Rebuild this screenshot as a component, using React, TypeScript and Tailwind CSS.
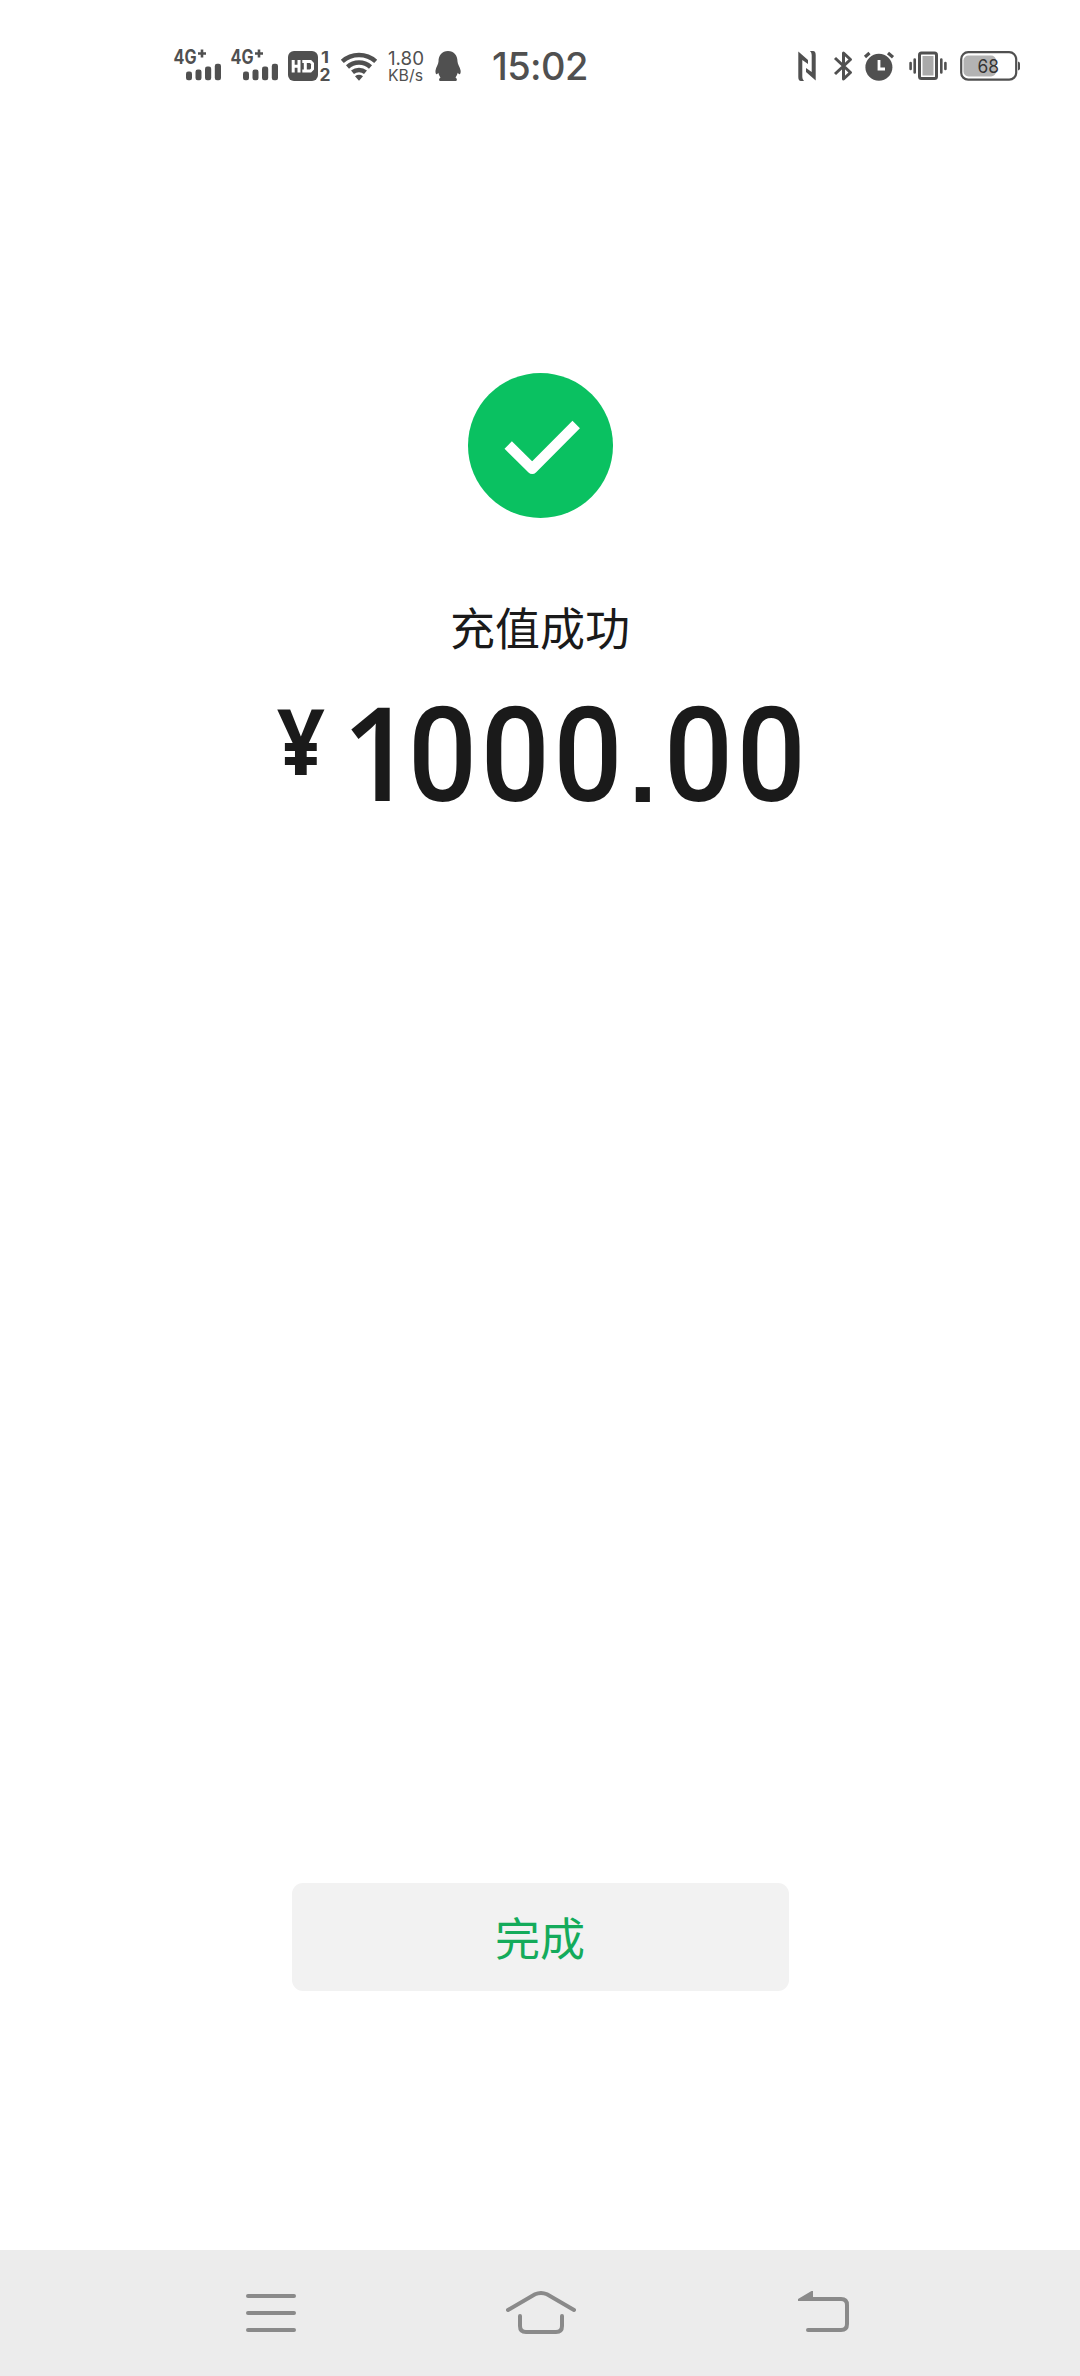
import { FC } from "react";

export default function App() {
  return (
    <div className="w-[1080px] h-[2376px] flex flex-col bg-white overflow-hidden font-['Noto_Sans','Noto_Sans_CJK_SC',sans-serif]">
      <StatusBar />

      <main className="flex-1 flex flex-col items-center">
        <SuccessIcon />
        <h1 className="mt-[75px] h-[68px] text-[45px] leading-[68px] text-[#1a1a1a] font-['Noto_Sans_CJK_SC',sans-serif]">充值成功</h1>

        {/* Amount */}
        <div className="mt-[20px] w-[527px] h-[140px] flex items-start whitespace-nowrap text-[#1a1a1a] leading-[140px] font-['Roboto',sans-serif]">
          <span className="w-[65.5px] shrink-0 mt-[2px] text-[91px] leading-[114px] font-bold font-['Open_Sans',sans-serif] origin-left scale-x-92">¥</span>
          <span className="w-[66px] shrink-0 text-[130px] font-semibold font-['Open_Sans',sans-serif] origin-left scale-x-96">1</span>
          <span className="w-[219px] shrink-0 mt-[5px] text-[132px] font-medium tracking-[4px] origin-left scale-x-92">000</span>
          <span className="w-[36.5px] shrink-0 mt-[16px] pl-[2px] text-[100px] font-bold font-['Liberation_Sans',sans-serif]">.</span>
          <span className="w-[140px] shrink-0 mt-[5px] text-[132px] font-medium tracking-[4px] origin-left scale-x-92">00</span>
        </div>

        <button className="mt-auto mb-[259px] w-[497px] h-[108px] rounded-[11px] bg-[#f2f2f2] text-[45px] leading-[108px] text-[#14ab5b] font-['Noto_Sans_CJK_SC',sans-serif]">
          完成
        </button>
      </main>

      <NavBar />
    </div>
  );
}

const StatusBar: FC = () => {
  return (
    <header className="h-[100px] pt-[50px] pl-[174px] pr-[60px] flex justify-between text-[#505050]">
      <div className="flex h-[32px]">
        <Signal />
        <Signal />
        <svg className="w-[43px] h-[32px] mr-[9px] overflow-visible" viewBox="0 0 43 32" fill="currentColor">
          <rect x="0" y="1" width="30" height="30" rx="6" />
          <path d="M5.2 10v12.5M11 10v12.5M5.2 16.200H11M14.300 11.500h8.200l2 2v5.500l-2 2h-8.200M17.300 11v10" fill="none" stroke="white" strokeWidth="3" />
          <text x="33" y="12.5" fontSize="15.500" fontWeight="700" textLength="8" lengthAdjust="spacingAndGlyphs" fontFamily="Inter">1</text>
          <text x="31.500" y="30.5" fontSize="17" fontWeight="700" textLength="11" lengthAdjust="spacingAndGlyphs" fontFamily="Inter">2</text>
        </svg>
        <svg className="w-[38px] h-[32px] mr-[9px]" viewBox="0 0 38 32" fill="none" stroke="currentColor" strokeWidth="4.500">
          <path d="M2.300 11.300a25 25 0 0 1 33.400 0" />
          <path d="M7.500 17a17 17 0 0 1 23 0" />
          <path d="M12.500 22.300a10 10 0 0 1 13 0" />
          <path d="M15 26.200q4-2.800 8 0L19 30.700z" fill="currentColor" stroke="none" />
        </svg>
        <svg className="w-[38px] h-[32px] mr-[9px] overflow-visible" viewBox="0 0 38 32" fill="currentColor" fontFamily="Inter">
          <text x="1" y="15" fontSize="18.5" textLength="36" lengthAdjust="spacingAndGlyphs">1.80</text>
          <text x="1" y="31" fontSize="15.5" textLength="35" lengthAdjust="spacingAndGlyphs">KB/s</text>
        </svg>
        <svg className="w-[28px] h-[32px] mr-[30px]" viewBox="0 0 28 32" fill="currentColor">
          <path d="M14 1C8 1 4.500 5.500 4.500 11.500C4.500 14 2 17 1.500 20.500C1.200 23 2 24.500 2.700 24.300C3.300 24.100 3.800 23.300 4.300 22.700C4.700 24.500 5.600 26 6.500 27.500C4.800 28.500 4.500 31 6.500 31H21.500C23.500 31 23.200 28.500 21.500 27.500C22.500 26 23.300 24.500 23.800 22.700C24.300 23.300 24.800 24.100 25.400 24.300C26.100 24.500 27 23 26.600 20.500C26 17 23.500 14 23.500 11.500C23.500 5.500 20 1 14 1Z" />
        </svg>
        <span className="text-[38px] leading-[32px] tracking-[-0.6px] font-medium font-['Inter',sans-serif]">15:02</span>
      </div>

      <div className="flex h-[32px]">
        {/* NFC */}
        <svg className="w-[20px] h-[32px] mr-[16px]" viewBox="0 0 20 32" fill="currentColor">
          <path d="M1.300 1.500L11 10V14L5.300 10V27Q5.300 29.500 7 31H4Q1.300 31 1.300 27Z" />
          <path d="M18.700 30.500L9 22V18L14.700 22V5Q14.700 2.500 13 1H16Q18.700 1 18.700 5Z" />
        </svg>
        {/* Bluetooth */}
        <svg className="w-[20px] h-[32px] mr-[9px]" viewBox="0 0 20 32" fill="none" stroke="currentColor" strokeWidth="3" strokeLinejoin="round">
          <path d="M2 8L17.500 22.500L10.500 29V3L17.500 9.500L2 24" />
        </svg>
        {/* Alarm */}
        <svg className="w-[34px] h-[32px] mr-[11px]" viewBox="0 0 34 32" fill="none" stroke="currentColor" strokeWidth="3.200">
          <circle cx="16.900" cy="17.300" r="13.500" fill="currentColor" stroke="none" />
          <path d="M3 7L7.500 3M26 3L31 7.300" />
          <path d="M17 10v9h6" stroke="white" strokeWidth="2.800" />
        </svg>
        {/* Vibrate */}
        <svg className="w-[41px] h-[32px] mr-[12px]" viewBox="0 0 41 32" fill="none" stroke="currentColor" strokeWidth="2.600">
          <rect x="12.500" y="3" width="17" height="25.500" rx="2" strokeWidth="3" />
          <rect x="15.500" y="6" width="11" height="19.500" fill="#aaa" stroke="none" />
          <path d="M3.600 13v6M7.700 9.500v13M34.300 9.500v13M38.400 13v6" strokeLinecap="round" />
        </svg>
        {/* Battery */}
        <svg className="w-[60px] h-[32px]" viewBox="0 0 60 32" fill="currentColor">
          <rect x="1.200" y="2.200" width="55" height="27.500" rx="7" fill="none" stroke="currentColor" strokeWidth="2.200" />
          <rect x="3.500" y="5.500" width="32.500" height="21" rx="5" fill="#b3b3b3" />
          <path d="M58 11.500q2 .5 2 2v5q0 1.500-2 2z" />
          <text x="17.500" y="22.500" fontSize="18.500" fill="#333" textLength="21.500" lengthAdjust="spacingAndGlyphs" fontFamily="Inter">68</text>
        </svg>
      </div>
    </header>
  );
};

// Signal strength of one SIM card
const Signal: FC = () => {
  return (
    <svg className="w-[47px] h-[32px] mr-[10px] overflow-visible" viewBox="0 0 47 32" fill="currentColor">
      <text x="-.5" y="14" fontSize="19.500" fontWeight="700" textLength="23" lengthAdjust="spacingAndGlyphs" fontFamily="Inter">4G</text>
      <path d="M24 3.500h8M28 -.5v8" stroke="currentColor" strokeWidth="2.600" />
      <rect x="12" y="21.500" width="6" height="8.700" rx="2.200" />
      <rect x="21.500" y="19.500" width="6" height="10.700" rx="2.200" />
      <rect x="31" y="16.500" width="6.200" height="13.700" rx="2.200" />
      <rect x="40.800" y="13.700" width="6.200" height="16.500" rx="2.200" />
    </svg>
  );
};

const SuccessIcon: FC = () => {
  return (
    <svg className="mt-[273px] w-[145px] h-[145px] shrink-0" viewBox="0 0 145 145">
      <circle cx="72.500" cy="72.500" r="72.500" fill="#0ac161" />
      <path d="M40.200 72L64.200 95.700L108.200 51.500" fill="none" stroke="white" strokeWidth="10.500" strokeLinejoin="round" />
    </svg>
  );
};

const NavBar: FC = () => {
  return (
    <nav className="h-[126px] pt-[40px] pl-[246px] flex bg-[#ececec] text-[#8a8a8a]">
      <svg className="w-[50px] h-[46px] mr-[210px]" viewBox="0 0 50 46" fill="none" stroke="currentColor" strokeWidth="4" strokeLinecap="round">
        <path d="M2 6H48M2 23H48M2 40H48" />
      </svg>
      <svg className="w-[70px] h-[46px] mr-[222px]" viewBox="0 0 70 46" fill="none" stroke="currentColor" strokeWidth="4" strokeLinecap="round">
        <path d="M2 20L29 4.300Q35 1.500 41 4.300L68 20" />
        <path d="M14 26V36Q14 42 20 42H50Q56 42 56 36V26" />
      </svg>
      <svg className="w-[52px] h-[46px]" viewBox="0 0 52 46" fill="none" stroke="currentColor" strokeWidth="4" strokeLinecap="round">
        <path d="M10 9H43Q49 9 49 15V34Q49 40 43 40H10" />
        <path d="M0 11V9L13.500 1H15V11Z" fill="currentColor" stroke="none" />
      </svg>
    </nav>
  );
};
